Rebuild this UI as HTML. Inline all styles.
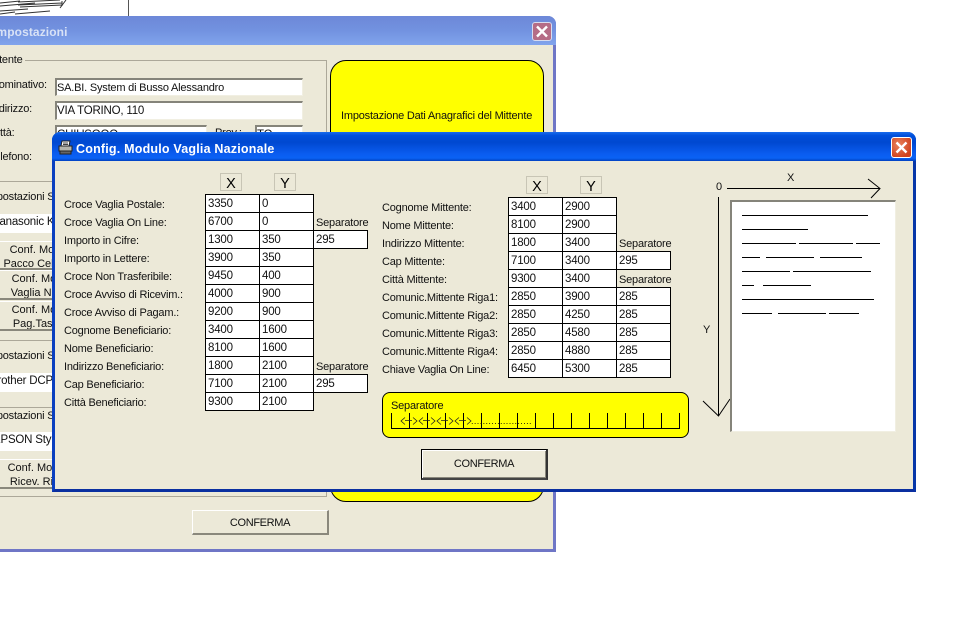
<!DOCTYPE html>
<html><head><meta charset="utf-8"><title>Config. Modulo Vaglia Nazionale</title>
<style>
html,body{margin:0;padding:0;background:#fff}
#p{position:relative;width:969px;height:634px;overflow:hidden;background:#fff;font:11px/14px "Liberation Sans",sans-serif;color:#111;letter-spacing:-.2px}
#p div{position:absolute;box-sizing:border-box;white-space:nowrap}
.in{background:#fff;border:2px solid #85847a;border-right-color:#f1efe2;border-bottom-color:#f1efe2;border-right-width:1px;border-bottom-width:1px;padding-left:0;line-height:16px;overflow:hidden;font-size:11.5px}
.btn{background:#ece9d8;border:1px solid #fff;border-right:2px solid #8a887c;border-bottom:2px solid #8a887c;text-align:center;line-height:14px;overflow:hidden;padding-top:1px;letter-spacing:0}
.c{background:#fff;border:1px solid #000;padding-left:2px;line-height:18px;height:19px;font-size:11.5px}
#p .l{height:14px;margin-top:1px}
.h{background:#000;height:1px}
.xy{width:22px;height:18px;background:#ece9d8;border:1px solid #c8c5b5;font-size:14.5px;line-height:21px;text-align:center;color:#000;letter-spacing:0}
#p .cf{letter-spacing:-.35px}
</style></head><body>
<div id="p">
<svg style="position:absolute;left:0;top:0" width="130" height="17" stroke="#333" fill="none" stroke-width="1"><path d="M0 3L20 1M0 6L35 3M18 2L60 0M18 5L62 3M0 11L28 9M15 14L50 11M20 7L62 5M0 14L15 12M62 1L62 6M66 0L60 8"/><path d="M128.5 0V16" stroke="#555"/></svg>

<!-- back window -->
<div style="left:-10px;top:16px;width:566px;height:536px;background:#ece9d8;border:3px solid #6f76c6;border-top:0;border-radius:8px 8px 0 0"></div>
<div style="left:-10px;top:16px;width:566px;height:29px;background:linear-gradient(#6d88d8,#7292e0 50%,#81a4ec);border-radius:8px 8px 0 0"></div>
<div style="left:-7px;top:25px;color:#d8e2f6;font:bold 12px/15px 'Liberation Sans',sans-serif;letter-spacing:.1px">Impostazioni</div>
<div style="left:532px;top:22px;width:20px;height:19px;background:#b56c86;border:1px solid #d8dcef;border-radius:3px"></div>
<svg style="position:absolute;left:532px;top:22px" width="20" height="19"><path d="M5 4.500L15 14.500M15 4.500L5 14.500" stroke="#fff" stroke-width="2.4"/></svg>

<div style="left:-15px;top:53px;">Mittente</div>
<div style="left:25px;top:60px;width:301px;height:1px;background:#aca899"></div>
<div style="left:326px;top:60px;width:1px;height:437px;background:#aca899"></div>
<div style="left:0;top:496px;width:326px;height:1px;background:#aca899"></div>
<div style="left:-9px;top:78px;">Nominativo:</div>
<div style="left:-10px;top:102px;">Indirizzo:</div>
<div style="left:-10px;top:126px;">Città:</div>
<div style="left:215px;top:126px;">Prov.:</div>
<div style="left:-11px;top:150px;">Telefono:</div>
<div class="in" style="left:55px;top:78px;width:248px;height:18px;font-size:11px">SA.BI. System di Busso Alessandro</div>
<div class="in" style="left:55px;top:101px;width:248px;height:19px">VIA TORINO, 110</div>
<div class="in" style="left:55px;top:125px;width:152px;height:14px;line-height:17px">CHIUSOOO</div>
<div class="in" style="left:255px;top:125px;width:48px;height:14px;line-height:17px">TO</div>

<div style="left:0;top:181px;width:60px;height:1px;background:#aca899"></div>
<div style="left:-15px;top:190px;">Impostazioni Stampa</div>
<div class="in" style="left:-8px;top:214px;width:70px;height:19px;border-width:0">Panasonic KX</div>
<div class="btn" style="left:-10px;top:241px;width:94px;height:29px">Conf. Mod.<br>Pacco Celere</div>
<div class="btn" style="left:-8px;top:270px;width:94px;height:30px">Conf. Mod.<br>Vaglia Naz.</div>
<div class="btn" style="left:-8px;top:301px;width:94px;height:30px">Conf. Mod.<br>Pag.Tassa</div>
<div style="left:0;top:340px;width:60px;height:1px;background:#aca899"></div>
<div style="left:-15px;top:349px;">Impostazioni Stampa</div>
<div class="in" style="left:-10px;top:373px;width:70px;height:19px;border-width:0">Brother DCP</div>
<div style="left:0;top:407px;width:60px;height:1px;background:#aca899"></div>
<div style="left:-15px;top:409px;">Impostazioni Stampa</div>
<div class="in" style="left:-10px;top:432px;width:70px;height:19px;border-width:0;padding-left:3px">EPSON Stylus</div>
<div class="btn" style="left:-12px;top:459px;width:94px;height:30px">Conf. Mod.<br>Ricev. Rit.</div>

<div style="left:330px;top:60px;width:214px;height:442px;background:#ff0;border:1px solid #000;border-radius:16px"></div>
<div style="left:341px;top:109px;">Impostazione Dati Anagrafici del Mittente</div>
<div class="btn cf" style="left:192px;top:510px;width:137px;height:25px;line-height:22px">CONFERMA</div>

<!-- front window -->
<div style="left:52px;top:132px;width:864px;height:360px;background:#ece9d8;border:3px solid #0a3fc0;border-top:0;border-bottom-color:#0a2fa0;border-right-color:#0636a8;border-radius:8px 8px 0 0"></div>
<div style="left:52px;top:132px;width:864px;height:29px;background:linear-gradient(#1a6cec,#0050dc 12%,#0048d0 35%,#0a5cf0 75%,#0a62f4 90%,#0040c0);border-radius:8px 8px 0 0"></div>
<svg style="position:absolute;left:58px;top:140px" width="15" height="15"><path d="M4 1L12 1L11 6L3 6Z" fill="#fff" stroke="#222"/><path d="M5 3H10M5 4.500H10" stroke="#444"/><rect x="1" y="6" width="13" height="5" fill="#b4b4ac" stroke="#222"/><rect x="2" y="11" width="11" height="3" fill="#666" stroke="#222"/></svg>
<div style="left:76px;top:142px;color:#fff;font:bold 12.5px/15px 'Liberation Sans',sans-serif;letter-spacing:.2px">Config. Modulo Vaglia Nazionale</div>
<div style="left:891px;top:137px;width:21px;height:21px;background:radial-gradient(circle at 35% 35%,#e8825c,#d0431e 75%);border:1px solid #fff;border-radius:3px"></div>
<svg style="position:absolute;left:891px;top:137px" width="21" height="21"><path d="M5.500 5.500L15.500 15.500M15.500 5.500L5.500 15.500" stroke="#fff" stroke-width="2.4"/></svg>

<div class="xy" style="left:220px;top:173px">X</div>
<div class="xy" style="left:274px;top:173px">Y</div>
<div class="xy" style="left:526px;top:176px">X</div>
<div class="xy" style="left:580px;top:176px">Y</div>

<!-- left labels -->
<div class="l" style="left:64px;top:197px">Croce Vaglia Postale:</div>
<div class="l" style="left:64px;top:215px">Croce Vaglia On Line:</div>
<div class="l" style="left:64px;top:233px">Importo in Cifre:</div>
<div class="l" style="left:64px;top:251px">Importo in Lettere:</div>
<div class="l" style="left:64px;top:269px">Croce Non Trasferibile:</div>
<div class="l" style="left:64px;top:287px">Croce Avviso di Ricevim.:</div>
<div class="l" style="left:64px;top:305px">Croce Avviso di Pagam.:</div>
<div class="l" style="left:64px;top:323px">Cognome Beneficiario:</div>
<div class="l" style="left:64px;top:341px">Nome Beneficiario:</div>
<div class="l" style="left:64px;top:359px">Indirizzo Beneficiario:</div>
<div class="l" style="left:64px;top:377px">Cap Beneficiario:</div>
<div class="l" style="left:64px;top:395px">Città Beneficiario:</div>
<div class="l" style="left:316px;top:215px">Separatore</div>
<div class="l" style="left:316px;top:359px">Separatore</div>

<!-- left grid -->
<div class="c" style="left:205px;top:194px;width:55px">3350</div><div class="c" style="left:259px;top:194px;width:55px">0</div>
<div class="c" style="left:205px;top:212px;width:55px">6700</div><div class="c" style="left:259px;top:212px;width:55px">0</div>
<div class="c" style="left:205px;top:230px;width:55px">1300</div><div class="c" style="left:259px;top:230px;width:55px">350</div><div class="c" style="left:313px;top:230px;width:55px">295</div>
<div class="c" style="left:205px;top:248px;width:55px">3900</div><div class="c" style="left:259px;top:248px;width:55px">350</div>
<div class="c" style="left:205px;top:266px;width:55px">9450</div><div class="c" style="left:259px;top:266px;width:55px">400</div>
<div class="c" style="left:205px;top:284px;width:55px">4000</div><div class="c" style="left:259px;top:284px;width:55px">900</div>
<div class="c" style="left:205px;top:302px;width:55px">9200</div><div class="c" style="left:259px;top:302px;width:55px">900</div>
<div class="c" style="left:205px;top:320px;width:55px">3400</div><div class="c" style="left:259px;top:320px;width:55px">1600</div>
<div class="c" style="left:205px;top:338px;width:55px">8100</div><div class="c" style="left:259px;top:338px;width:55px">1600</div>
<div class="c" style="left:205px;top:356px;width:55px">1800</div><div class="c" style="left:259px;top:356px;width:55px">2100</div>
<div class="c" style="left:205px;top:374px;width:55px">7100</div><div class="c" style="left:259px;top:374px;width:55px">2100</div><div class="c" style="left:313px;top:374px;width:55px">295</div>
<div class="c" style="left:205px;top:392px;width:55px">9300</div><div class="c" style="left:259px;top:392px;width:55px">2100</div>

<!-- right labels -->
<div class="l" style="left:382px;top:200px">Cognome Mittente:</div>
<div class="l" style="left:382px;top:218px">Nome Mittente:</div>
<div class="l" style="left:382px;top:236px">Indirizzo Mittente:</div>
<div class="l" style="left:382px;top:254px">Cap Mittente:</div>
<div class="l" style="left:382px;top:272px">Città Mittente:</div>
<div class="l" style="left:382px;top:290px">Comunic.Mittente Riga1:</div>
<div class="l" style="left:382px;top:308px">Comunic.Mittente Riga2:</div>
<div class="l" style="left:382px;top:326px">Comunic.Mittente Riga3:</div>
<div class="l" style="left:382px;top:344px">Comunic.Mittente Riga4:</div>
<div class="l" style="left:382px;top:362px">Chiave Vaglia On Line:</div>
<div class="l" style="left:619px;top:236px">Separatore</div>
<div class="l" style="left:619px;top:272px">Separatore</div>

<!-- right grid -->
<div class="c" style="left:508px;top:197px;width:55px">3400</div><div class="c" style="left:562px;top:197px;width:55px">2900</div>
<div class="c" style="left:508px;top:215px;width:55px">8100</div><div class="c" style="left:562px;top:215px;width:55px">2900</div>
<div class="c" style="left:508px;top:233px;width:55px">1800</div><div class="c" style="left:562px;top:233px;width:55px">3400</div>
<div class="c" style="left:508px;top:251px;width:55px">7100</div><div class="c" style="left:562px;top:251px;width:55px">3400</div><div class="c" style="left:616px;top:251px;width:55px">295</div>
<div class="c" style="left:508px;top:269px;width:55px">9300</div><div class="c" style="left:562px;top:269px;width:55px">3400</div>
<div class="c" style="left:508px;top:287px;width:55px">2850</div><div class="c" style="left:562px;top:287px;width:55px">3900</div><div class="c" style="left:616px;top:287px;width:55px">285</div>
<div class="c" style="left:508px;top:305px;width:55px">2850</div><div class="c" style="left:562px;top:305px;width:55px">4250</div><div class="c" style="left:616px;top:305px;width:55px">285</div>
<div class="c" style="left:508px;top:323px;width:55px">2850</div><div class="c" style="left:562px;top:323px;width:55px">4580</div><div class="c" style="left:616px;top:323px;width:55px">285</div>
<div class="c" style="left:508px;top:341px;width:55px">2850</div><div class="c" style="left:562px;top:341px;width:55px">4880</div><div class="c" style="left:616px;top:341px;width:55px">285</div>
<div class="c" style="left:508px;top:359px;width:55px">6450</div><div class="c" style="left:562px;top:359px;width:55px">5300</div><div class="c" style="left:616px;top:359px;width:55px">285</div>

<!-- separator panel -->
<div style="left:382px;top:392px;width:307px;height:46px;background:#ff0;border:1px solid #000;border-radius:8px"></div>
<div style="left:391px;top:399px">Separatore</div>
<svg style="position:absolute;left:382px;top:392px" width="307" height="46" stroke="#000" stroke-width="1" fill="none"><path d="M9.500 21V36.500H297.500V21M27.500 21V36M45.500 21V36M63.500 21V36M81.500 21V36M99.500 21V36M117.500 21V36M135.500 21V36M153.500 21V36M171.500 21V36M189.500 21V36M207.500 21V36M225.500 21V36M243.500 21V36M261.500 21V36M279.500 21V36"/></svg>
<svg style="position:absolute;left:382px;top:392px" width="307" height="46" fill="none" stroke="#222" stroke-width=".8"><path d="M23 25.500L19 29L23 32.500M23 28.500H30M31 25.500L35 29L31 32.500M41 25.500L37 29L41 32.500M41 28.500H48M49 25.500L53 29L49 32.500M59 25.500L55 29L59 32.500M59 28.500H66M67 25.500L71 29L67 32.500M77 25.500L73 29L77 32.500M77 28.500H84M85 25.500L89 29L85 32.500"/></svg>
<div style="left:471px;top:415px;letter-spacing:.4px;font-size:9px;line-height:12px">.....................</div>

<div class="cf" style="left:421px;top:449px;width:127px;height:31px;background:#ece9d8;border:1px solid #000;border-right:2px solid #333;border-bottom:2px solid #444;box-shadow:inset 1px 1px 0 #fff,inset -1px -1px 0 #8a887c;text-align:center;line-height:29px">CONFERMA</div>

<!-- diagram -->
<div style="left:716px;top:180px">0</div>
<div style="left:787px;top:171px">X</div>
<div style="left:703px;top:323px">Y</div>
<svg style="position:absolute;left:700px;top:175px" width="190" height="245" fill="none" stroke="#000"><path d="M27 13.500H180M168 4L180 13.500L171 23" /><path d="M18.500 22V241M3 226L18.500 241L30 224"/></svg>
<div style="left:730px;top:200px;width:166px;height:232px;background:#fff;border:2px solid #85847a;border-right:1px solid #f1efe2;border-bottom:1px solid #f1efe2"></div>
<div class="h" style="left:742px;top:215px;width:126px"></div>
<div class="h" style="left:742px;top:229px;width:66px"></div>
<div class="h" style="left:742px;top:243px;width:54px"></div><div class="h" style="left:799px;top:243px;width:54px"></div><div class="h" style="left:856px;top:243px;width:24px"></div>
<div class="h" style="left:742px;top:257px;width:18px"></div><div class="h" style="left:766px;top:257px;width:48px"></div><div class="h" style="left:820px;top:257px;width:42px"></div>
<div class="h" style="left:742px;top:271px;width:48px"></div><div class="h" style="left:793px;top:271px;width:78px"></div>
<div class="h" style="left:742px;top:285px;width:12px"></div><div class="h" style="left:763px;top:285px;width:48px"></div>
<div class="h" style="left:742px;top:299px;width:132px"></div>
<div class="h" style="left:742px;top:313px;width:30px"></div><div class="h" style="left:778px;top:313px;width:48px"></div><div class="h" style="left:829px;top:313px;width:30px"></div>
</div>
</body></html>
